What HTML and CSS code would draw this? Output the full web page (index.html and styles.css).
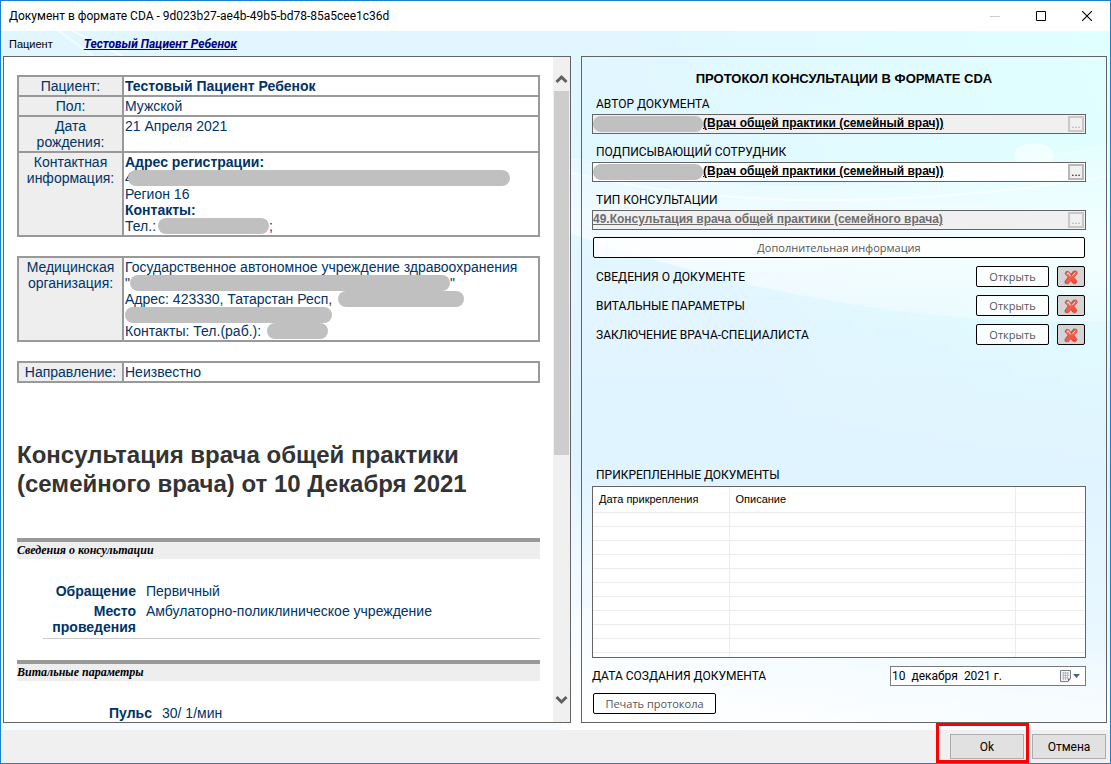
FILE: index.html
```html
<!DOCTYPE html>
<html lang="ru">
<head>
<meta charset="utf-8">
<title>Документ в формате CDA</title>
<link rel="stylesheet" href="styles.css">
</head>
<body>
<svg class="defs" width="0" height="0" aria-hidden="true">
  <defs>
    <linearGradient id="red" x1="0" y1="0" x2="1" y2="1">
      <stop offset="0" stop-color="#ff9080"/><stop offset=".5" stop-color="#fa5a45"/><stop offset="1" stop-color="#ee4430"/>
    </linearGradient>
    <symbol id="cross" viewBox="0 0 16 16">
      <path d="M1.500 4.500 3.500 1.800 5.400 2.200 7.300 5.500 10.300 1.800 12.500 1.600 13 3.600 9.700 7.800 12.500 12 11 14.600 9.400 14.200 7 10.700 3.800 14.800 1.800 14.400 1.500 12.300 4.800 8Z" fill="#777"/>
      <path d="M2.500 5 4.700 2.600 6.500 3.100 8.300 6 11.200 2.400 13.800 2.200 14.300 4.500 11.100 8.300 14.200 12.400 12.400 15 10.400 14.600 8 11.500 5.200 14.900 2.700 14.400 2.500 12.300 5.700 8.400Z" fill="url(#red)" stroke="#d8382a" stroke-width=".5"/>
      <path d="M3.900 4.700 5.200 3.900 7.600 7.400M12.200 3.600 9.500 6.900" fill="none" stroke="#ffe0d8" stroke-width="1"/>
    </symbol>
  </defs>
</svg>
<div class="window">
  <header class="titlebar">
    <h1 class="caption">Документ в формате CDA - 9d023b27-ae4b-49b5-bd78-85a5cee1c36d</h1>
    <div class="caption-buttons">
      <button class="cap" type="button" aria-label="Свернуть" disabled><svg width="10" height="10"><path d="M0 5.500h10" stroke="#ccc"/></svg></button>
      <button class="cap" type="button" aria-label="Развернуть"><svg width="10" height="10"><path d="M.5.500h9v9h-9z" fill="none" stroke="#000"/></svg></button>
      <button class="cap" type="button" aria-label="Закрыть"><svg width="10" height="10"><path d="M0 0 10 10M10 0 0 10" stroke="#000" stroke-width="1.100"/></svg></button>
    </div>
  </header>

  <div class="client">
    <svg class="backdrop" viewBox="0 0 1109 699" preserveAspectRatio="none" aria-hidden="true">
      <defs>
        <linearGradient id="sky" x1="0" y1="0" x2="0" y2="1">
          <stop offset="0" stop-color="#e1f6ff"/><stop offset=".2" stop-color="#e1f8ff"/><stop offset=".35" stop-color="#e3f6ff"/>
          <stop offset=".65" stop-color="#e0f4ff"/><stop offset=".85" stop-color="#e8f7ff"/><stop offset="1" stop-color="#f6fcff"/>
        </linearGradient>
        <linearGradient id="wave" x1="0" y1="0" x2="0" y2="1">
          <stop offset="0" stop-color="#fff" stop-opacity=".1"/><stop offset=".6" stop-color="#fff" stop-opacity=".65"/><stop offset="1" stop-color="#fff" stop-opacity=".3"/>
        </linearGradient>
        <linearGradient id="low" gradientUnits="userSpaceOnUse" x1="620" y1="699" x2="700" y2="470">
          <stop offset="0" stop-color="#fff"/><stop offset="1" stop-color="#fff" stop-opacity="0"/>
        </linearGradient>
        <linearGradient id="cyan" gradientUnits="userSpaceOnUse" x1="1109" y1="60" x2="700" y2="240">
          <stop offset="0" stop-color="#e0ffff"/><stop offset="1" stop-color="#e0ffff" stop-opacity="0"/>
        </linearGradient>
        <linearGradient id="fade" x1="0" y1="0" x2="0" y2="1">
          <stop offset="0" stop-color="#e0f4ff" stop-opacity="0"/><stop offset="1" stop-color="#e0f4ff"/>
        </linearGradient>
      </defs>
      <rect width="1109" height="699" fill="url(#sky)"/>
      <rect width="1109" height="440" fill="url(#cyan)"/>
      <rect y="240" width="1109" height="200" fill="url(#fade)"/>
      <path d="M570 127Q820 190 1109 110V290Q860 300 570 203Z" fill="url(#wave)"/>
      <rect x="560" y="400" width="549" height="299" fill="url(#low)"/>
      <path d="M570 142Q800 195 1109 145" fill="none" stroke="#fff" stroke-opacity=".6" stroke-width="2"/>
      <path d="M570 128Q850 160 1109 115" fill="none" stroke="#fff" stroke-opacity=".4"/>
      <ellipse cx="1033" cy="124" rx="20" ry="12" fill="#fff" fill-opacity=".5"/>
      <path d="M58 0 92 25M72 0 122 25" stroke="#fff" stroke-opacity=".6" stroke-width="2"/>
    </svg>

    <div class="patient-bar">
      <span>Пациент</span>
      <a class="patient-link" href="#">Тестовый Пациент Ребенок</a>
    </div>

    <div class="panes">
      <section class="document" aria-label="Документ">
        <div class="page">
          <table class="card">
            <tr><th>Пациент:</th><td><b>Тестовый Пациент Ребенок</b></td></tr>
            <tr><th>Пол:</th><td>Мужской</td></tr>
            <tr><th>Дата рождения:</th><td>21 Апреля 2021</td></tr>
            <tr><th>Контактная информация:</th><td>
              <div><b>Адрес регистрации:</b></div>
              <div class="line">4<span class="mask mask-xl tuck"></span></div>
              <div>Регион 16</div>
              <div><b>Контакты:</b></div>
              <div class="line">Тел.:<span class="mask mask-m"></span>;</div>
            </td></tr>
          </table>
          <table class="card">
            <tr><th>Медицинская организация:</th><td>
              <div>Государственное автономное учреждение здравоохранения</div>
              <div class="line">"<span class="mask mask-l"></span>"</div>
              <div class="line">Адрес: 423330, Татарстан Респ,<span class="mask mask-n"></span></div>
              <div class="line"><span class="mask mask-o"></span></div>
              <div class="line">Контакты: Тел.(раб.):<span class="mask mask-s"></span></div>
            </td></tr>
          </table>
          <table class="card">
            <tr><th>Направление:</th><td>Неизвестно</td></tr>
          </table>

          <h2 class="doc-title">Консультация врача общей практики (семейного врача) от 10 Декабря 2021</h2>

          <h3 class="section">Сведения о консультации</h3>
          <dl class="facts ruled">
            <dt>Обращение</dt><dd>Первичный</dd>
            <dt>Место проведения</dt><dd>Амбулаторно-поликлиническое учреждение</dd>
          </dl>
          <h3 class="section">Витальные параметры</h3>
          <dl class="facts wide">
            <dt>Пульс</dt><dd>30/ 1/мин</dd>
          </dl>
        </div>
        <div class="scrollbar" aria-hidden="true">
          <svg width="17" height="34"><path d="M3.500 25 8.500 20 13.500 25" fill="none" stroke="#606060" stroke-width="3"/></svg>
          <div class="track"><div class="thumb"></div></div>
          <svg width="17" height="34"><path d="M3.500 9 8.500 14 13.500 9" fill="none" stroke="#606060" stroke-width="3"/></svg>
        </div>
      </section>

      <form class="protocol">
        <h2 class="form-title">ПРОТОКОЛ КОНСУЛЬТАЦИИ В ФОРМАТЕ CDA</h2>

        <div class="fields">
          <div class="field">
            <label for="author">АВТОР ДОКУМЕНТА</label>
            <div class="picker off">
              <span class="mask mask-name"></span>
              <input id="author" type="text" readonly value="(Врач общей практики (семейный врач))">
              <button type="button" class="dots" disabled aria-label="Выбрать автора">...</button>
            </div>
          </div>
          <div class="field">
            <label for="signer">ПОДПИСЫВАЮЩИЙ СОТРУДНИК</label>
            <div class="picker">
              <span class="mask mask-name"></span>
              <input id="signer" type="text" value="(Врач общей практики (семейный врач))">
              <button type="button" class="dots" aria-label="Выбрать сотрудника">...</button>
            </div>
          </div>
          <div class="field">
            <label for="kind">ТИП КОНСУЛЬТАЦИИ</label>
            <div class="picker off">
              <input id="kind" type="text" disabled value="49.Консультация врача общей практики (семейного врача)">
              <button type="button" class="dots" disabled aria-label="Выбрать тип">...</button>
            </div>
          </div>
        </div>

        <button type="button" class="flat">Дополнительная информация</button>

        <div class="parts">
          <div class="part"><span>СВЕДЕНИЯ О ДОКУМЕНТЕ</span><button type="button" class="flat open">Открыть</button><button type="button" class="flat remove" aria-label="Удалить"><svg width="16" height="16"><use href="#cross"/></svg></button></div>
          <div class="part"><span>ВИТАЛЬНЫЕ ПАРАМЕТРЫ</span><button type="button" class="flat open">Открыть</button><button type="button" class="flat remove" aria-label="Удалить"><svg width="16" height="16"><use href="#cross"/></svg></button></div>
          <div class="part"><span>ЗАКЛЮЧЕНИЕ ВРАЧА-СПЕЦИАЛИСТА</span><button type="button" class="flat open">Открыть</button><button type="button" class="flat remove" aria-label="Удалить"><svg width="16" height="16"><use href="#cross"/></svg></button></div>
        </div>

        <div class="attached">
          <h3 class="attached-title">ПРИКРЕПЛЕННЫЕ ДОКУМЕНТЫ</h3>
          <div class="grid">
            <table>
              <thead><tr><th class="col-date">Дата прикрепления</th><th>Описание</th><th class="col-rest"></th></tr></thead>
              <tbody>
                <tr><td></td><td></td><td></td></tr><tr><td></td><td></td><td></td></tr>
                <tr><td></td><td></td><td></td></tr><tr><td></td><td></td><td></td></tr>
                <tr><td></td><td></td><td></td></tr><tr><td></td><td></td><td></td></tr>
                <tr><td></td><td></td><td></td></tr><tr><td></td><td></td><td></td></tr>
                <tr><td></td><td></td><td></td></tr><tr><td></td><td></td><td></td></tr>
                <tr><td></td><td></td><td></td></tr>
              </tbody>
            </table>
          </div>
        </div>

        <div class="created">
          <label for="created">ДАТА СОЗДАНИЯ ДОКУМЕНТА</label>
          <div class="date">
            <input id="created" type="text" value="10  декабря  2021 г.">
            <button type="button" aria-label="Открыть календарь">
              <svg width="22" height="14" viewBox="0 0 22 14">
                <path d="M1.500 1.500h10v8l-2.500 3h-7.500z" fill="#f4f4f6" stroke="#7d7d85"/>
                <path d="M11.500 9.500h-2.500v3z" fill="#666"/>
                <path d="M3 4h7M3 6.500h7M3 9h6M4.500 3v8M6.500 3v8M8.500 3v7" stroke="#b4bdd0"/>
                <path d="M14 5h7l-3.500 4z" fill="#44608f"/>
              </svg>
            </button>
          </div>
        </div>
        <button type="button" class="flat print">Печать протокола</button>
      </form>
    </div>
  </div>

  <footer class="actions">
    <div class="highlight"><button type="button" class="std">Ok</button></div>
    <button type="button" class="std">Отмена</button>
  </footer>
</div>
</body>
</html>
```

FILE: styles.css
```css
* { box-sizing: border-box; }
body { margin: 0; font: 12px/16px Roboto, "Liberation Sans", sans-serif; color: #000; }
h1, h2, h3, dl, dd { margin: 0; }
button, input { font: inherit; color: inherit; }
.defs { position: absolute; }

.window { display: flex; flex-direction: column; height: 100vh; border: 1px solid #1a80d2; background: #f0f0f0; }

.titlebar { display: flex; align-items: center; justify-content: space-between; height: 30px; padding-left: 8px; background: #fff; }
.caption { font-size: 12px; font-weight: normal; }
.caption-buttons { display: flex; }
.cap { display: grid; place-items: center; width: 46px; height: 30px; padding: 0; border: 0; background: none; }

.client { position: relative; z-index: 0; flex: 1; min-height: 0; display: flex; flex-direction: column; padding: 0 3px 7px 2px; }
.backdrop { position: absolute; inset: 0; width: 100%; height: 100%; z-index: -1; }
.patient-bar { display: flex; align-items: center; gap: 31px; height: 25px; padding-left: 6px; font-size: 11px; font-family: "Liberation Sans", Arial, sans-serif; }
.patient-link { color: #000080; font: italic bold 12px/16px Roboto, sans-serif; }

.panes { flex: 1; min-height: 0; display: grid; grid-template-columns: 568fr 526fr; gap: 10px; }

.document { display: flex; min-height: 0; overflow: hidden; border: 1px solid #646464; background: #fff; }
.page { flex: 1; min-width: 0; padding: 18px 13px 0; font: 14px/16px "Liberation Sans", Arial, sans-serif; color: #003366; }
.scrollbar { display: flex; flex-direction: column; width: 17px; background: #f0f0f0; }
.track { flex: 1; }
.thumb { width: 15px; height: 61%; margin: 0 auto; background: #cdcdcd; }

.card { width: 100%; border-collapse: collapse; margin-bottom: 19px; table-layout: fixed; }
.card th, .card td { border: 2px solid #999; padding: 1px; vertical-align: top; }
.card th { width: 105px; font-weight: normal; background: #eee; }
.line { display: flex; align-items: center; height: 16px; }
.mask { flex: none; height: 16px; border-radius: 8px; background: #c0c0c0; }
.mask-xl { width: 382px; }
.tuck { margin-left: -5px; }
.mask-l { width: 320px; }
.mask-m { width: 111px; margin-left: 2px; }
.mask-n { width: 126px; margin-left: 6px; }
.mask-o { width: 207px; }
.mask-s { width: 61px; margin-left: 6px; }
.mask-name { width: 110px; }

.doc-title { margin: 57px 0 40px; font-size: 24px; line-height: 29px; color: #333; }
.section { height: 21px; border-top: 4px solid #999; background: #eee; color: #000; font: italic bold 12px/17px "Liberation Serif", "Times New Roman", serif; }
.facts { display: grid; grid-template-columns: 93px 1fr; gap: 4px 10px; margin-left: 26px; padding: 24px 0 3px; }
.facts dt { font-weight: bold; text-align: right; }
.ruled { border-bottom: 1px solid #c8c8c8; margin-bottom: 21px; }
.wide { grid-template-columns: 109px 1fr; }

.protocol { display: flex; flex-direction: column; min-width: 0; padding: 14px 20px 8px 10px; border: 1px solid #646464; }
.form-title { margin-bottom: 8px; padding-left: 10px; font: bold 13px/16px "Liberation Sans", Arial, sans-serif; text-align: center; }
.fields { display: grid; gap: 9px; margin-bottom: 7px; }
.field label { display: block; padding-left: 4px; line-height: 19px; }
.picker { display: flex; align-items: center; height: 20px; border: 1px solid #646464; background: #fff; }
.picker input { flex: 1; min-width: 0; height: 18px; padding: 0 0 2px; border: 0; background: none; font: bold 12px/16px "Liberation Sans", Arial, sans-serif; text-decoration: underline; }
.picker input:disabled { color: #6d6d6d; }
.off { background: #f0f0f0; }
.dots { width: 16px; height: 16px; margin: 0 1px; padding: 0; border: 2px solid #b8b8b8; background: #f0f0f0; line-height: 10px; }
.dots:disabled { color: #aaa; border-color: #c8c8c8; }

.flat { height: 21px; margin: 0 1px; padding: 0; border: 1px solid #000; border-radius: 2px; background: #ffffffcc; color: #555; font: 11px/16px "Open Sans", "Noto Sans", sans-serif; }
.parts { display: grid; gap: 8px; margin-top: 8px; }
.part { display: flex; align-items: center; padding-left: 4px; }
.part span { flex: 1; }
.open { width: 73px; }
.remove { display: grid; place-items: center; width: 28px; margin-left: 7px; background: #d4d4d4; }

.attached { margin-top: auto; }
.attached-title { padding-left: 4px; font-size: 12px; font-weight: normal; line-height: 22px; }
.grid { height: 172px; overflow: hidden; border: 1px solid #646464; background: #fff; }
.grid table { width: 100%; border-collapse: collapse; table-layout: fixed; font: 11px/16px "Liberation Sans", Arial, sans-serif; }
.grid th { height: 25px; padding: 0 6px; font-weight: normal; text-align: left; }
.grid td { height: 14px; padding: 0; }
.grid th, .grid td { border-right: 1px solid #ececec; border-bottom: 1px solid #ececec; }
.grid th:last-child, .grid td:last-child { border-right: 0; }
.col-date { width: 136px; }
.col-rest { width: 70px; }

.created { display: flex; align-items: center; justify-content: space-between; margin: 8px 0 7px; }
.date { display: flex; align-items: center; width: 196px; height: 20px; border: 1px solid #7a7a7a; background: #fff; }
.date input { flex: 1; min-width: 0; height: 18px; padding: 0 1px; border: 0; background: none; white-space: pre; }
.date button { display: flex; padding: 0 4px 0 0; border: 0; background: none; }
.print { align-self: flex-start; width: 123px; }

.actions { display: flex; align-items: center; justify-content: flex-end; gap: 3px; height: 33px; padding-right: 4px; }
.highlight { display: flex; align-items: flex-end; height: 40px; margin-top: -7px; padding: 0 2px 1px 11px; border: 3px solid #f00; z-index: 1; }
.std { width: 74px; height: 25px; padding: 0; border: 1px solid #adadad; background: #e1e1e1; }
```
